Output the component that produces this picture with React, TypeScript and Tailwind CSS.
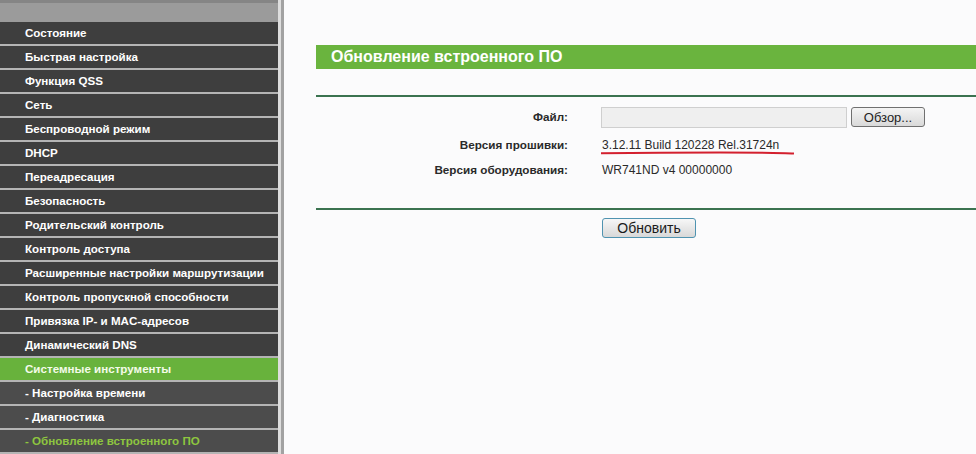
const menu: { label: string; kind?: 'active' | 'sub' | 'current' }[] = [
  { label: 'Состояние' },
  { label: 'Быстрая настройка' },
  { label: 'Функция QSS' },
  { label: 'Сеть' },
  { label: 'Беспроводной режим' },
  { label: 'DHCP' },
  { label: 'Переадресация' },
  { label: 'Безопасность' },
  { label: 'Родительский контроль' },
  { label: 'Контроль доступа' },
  { label: 'Расширенные настройки маршрутизации' },
  { label: 'Контроль пропускной способности' },
  { label: 'Привязка IP- и MAC-адресов' },
  { label: 'Динамический DNS' },
  { label: 'Системные инструменты', kind: 'active' },
  { label: '- Настройка времени', kind: 'sub' },
  { label: '- Диагностика', kind: 'sub' },
  { label: '- Обновление встроенного ПО', kind: 'current' },
]

function Sidebar() {
  return (
    <div className="flex w-[284px] shrink-0">
      <div className="flex w-[278px] flex-col bg-[#b4b4b4]">
        <div className="h-[22px] border-t-[3px] border-[#858585] bg-[#9b9b9b]" />
        {menu.map((item) => {
          let cls = 'bg-[#3e3e3e] text-white'
          if (item.kind === 'active') cls = 'bg-[#68b23c] text-[#f4fbe9]'
          if (item.kind === 'sub') cls = 'bg-[#4c4c4c] text-white'
          if (item.kind === 'current') cls = 'bg-[#4c4c4c] text-[#8ec63f]'
          return (
            <div
              key={item.label}
              className={`mb-[2px] flex h-[22px] items-center pl-[25px] text-[11.6px] font-bold ${cls}`}
            >
              {item.label}
            </div>
          )
        })}
      </div>
      <div className="w-[3px] bg-[#dedede]" />
      <div className="w-[3px] bg-[#a2a2a2]" />
    </div>
  )
}

function Label({ children }: { children: string }) {
  return (
    <div className="w-[252px] text-right text-[11.7px] font-bold text-[#2a2a2a]">{children}</div>
  )
}

export default function App() {
  return (
    <div
      className="flex h-[454px] w-[976px] overflow-hidden bg-[#fbfbfc]"
      style={{ fontFamily: '"Liberation Sans", Arial, sans-serif' }}
    >
      <Sidebar />
      <div className="flex flex-1 flex-col pl-[32px] pt-[45px]">
        <div className="flex h-[24px] items-center bg-[#6ab43e] pl-[15px] text-[16px] font-bold text-white">
          Обновление встроенного ПО
        </div>
        <div className="mt-[26px] h-[2px] bg-[#3b7350]" />

        <div className="mt-[9px] flex h-[22px] items-center">
          <Label>Файл:</Label>
          <div className="ml-[33px] flex items-center gap-[4px]">
            <div className="h-[21px] w-[246px] border border-[#cfcfcf] bg-[#efefef]" />
            <button className="h-[20px] w-[74px] rounded-[3px] border border-[#707070] bg-gradient-to-b from-[#f4f4f4] to-[#d9d9d9] text-[13px] text-[#222]">
              Обзор...
            </button>
          </div>
        </div>

        <div className="mt-[5px] flex h-[24px] items-center">
          <Label>Версия прошивки:</Label>
          <div className="relative ml-[34px] text-[12px] text-[#2a2a2a]">
            3.12.11 Build 120228 Rel.31724n
            <svg className="absolute left-[-2px] top-[14px]" width="196" height="6" viewBox="0 0 196 6">
              <path d="M1 3.2 Q 60 2.6 120 2.6 T 194 3.6" stroke="#d3202e" strokeWidth="2" fill="none" />
            </svg>
          </div>
        </div>

        <div className="mt-[1px] flex h-[24px] items-center">
          <Label>Версия оборудования:</Label>
          <div className="ml-[34px] text-[12px] text-[#2a2a2a]">WR741ND v4 00000000</div>
        </div>

        <div className="mt-[26px] h-[2px] bg-[#3b7350]" />

        <div className="mt-[8px] flex">
          <div className="w-[252px]" />
          <button className="ml-[34px] h-[20px] w-[94px] rounded-[3px] border border-[#4f93b0] bg-gradient-to-b from-[#f7f7f7] to-[#d8d8d8] text-[14px] leading-none text-[#1a1a1a]">
            Обновить
          </button>
        </div>
      </div>
    </div>
  )
}
